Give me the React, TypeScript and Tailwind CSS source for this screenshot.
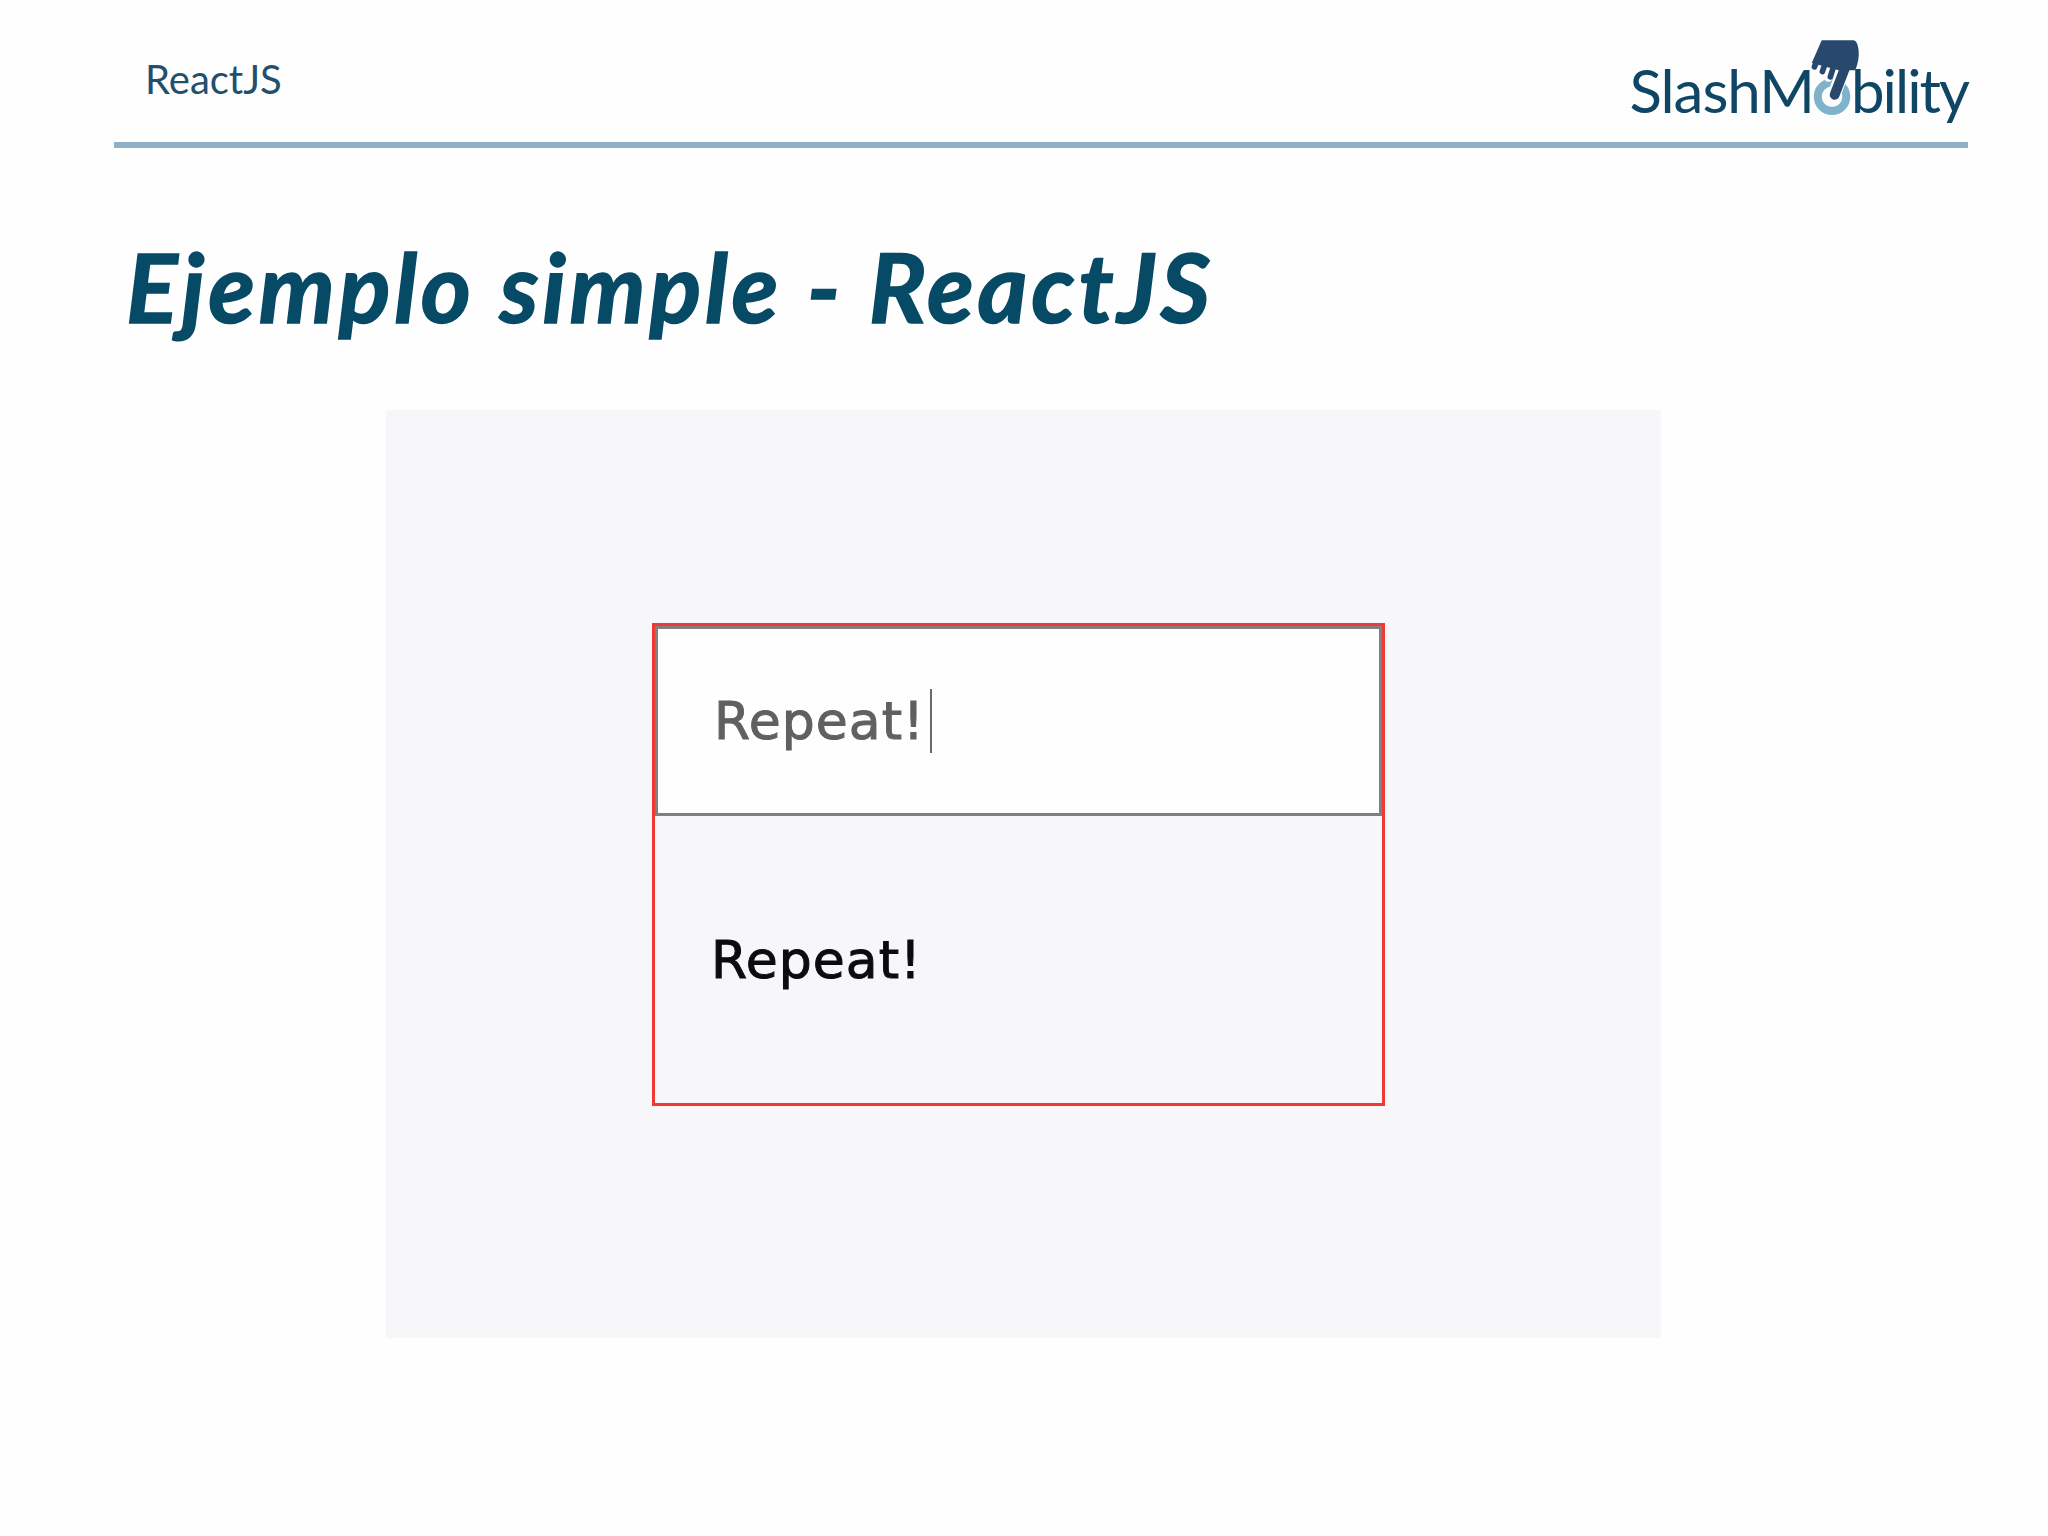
const Hand = () => (
  <svg
    viewBox="620 50 180 250"
    className="absolute right-[101px] top-[-23px] h-[83px] w-[60px]"
  >
    <circle cx="695" cy="230" r="43" fill="none" stroke="#7fb3cb" strokeWidth="24" />
    {/* white halo so the ring breaks around the finger */}
    <path d="M740 120 L702 222" stroke="#fefefe" strokeWidth="40" strokeLinecap="round" />
    <path d="M650 125 L640 140 M672 130 L662 155 M698 135 L684 172" stroke="#fefefe" strokeWidth="26" strokeLinecap="round" />
    <path d="M664 60 L760 60 Q772 62 775 90 Q778 120 765 150 L715 150 L634 128 Z" fill="#27496d" />
    <path d="M652 115 L642 140 M678 120 L666 154 M704 125 L690 170" stroke="#27496d" strokeWidth="17" strokeLinecap="round" />
    <path d="M745 115 L703 224" stroke="#27496d" strokeWidth="30" strokeLinecap="round" />
  </svg>
);

const Logo = () => (
  <div className="relative flex items-center font-['Lato',sans-serif] text-[60px] font-normal leading-none text-[#0f4666]">
    <span className="tracking-[-1px]">SlashM</span>
    <span className="w-[37px]" />
    <span className="tracking-[-2px]">bility</span>
    <Hand />
  </div>
);

export default function App() {
  return (
    <div className="h-[1536px] w-[2048px] overflow-hidden bg-[#fefefe]">
      <header className="ml-[114px] flex h-[148px] w-[1854px] items-end justify-between border-b-[6px] border-[#8fb0c6] pb-[22px] pl-[31px]">
        <span className="mb-[21px] font-['Lato',sans-serif] text-[40px] leading-none text-[#234f6e]">ReactJS</span>
        <Logo />
      </header>
      <h1 className="ml-[126px] mt-[88px] font-['Lato',sans-serif] text-[96px] font-bold italic leading-[100px] tracking-[3.75px] text-[#064a66] [-webkit-text-stroke:1.5px_#064a66]">
        Ejemplo simple - ReactJS
      </h1>
      <section className="ml-[386px] mt-[74px] h-[928px] w-[1275px] bg-[#f7f7f9] pl-[266px] pt-[213px]">
        <div className="h-[483px] w-[733px] border-[3px] border-[#ee3a36]">
          <div className="flex h-[190px] items-center border-[3px] border-[#808080] bg-[#fefefe] pl-[56px]">
            <span className="font-['DejaVu_Sans',sans-serif] text-[52px] tracking-[1px] text-[#5f6062] [-webkit-text-stroke:1px_#5f6062]">Repeat!</span>
            <span className="ml-[5px] h-[64px] w-[2px] bg-[#6a6a6a]" />
          </div>
          <p className="mt-[112px] pl-[56px] font-['DejaVu_Sans',sans-serif] text-[52px] leading-[64px] tracking-[1px] text-[#0b0b10] [-webkit-text-stroke:1px_#0b0b10]">Repeat!</p>
        </div>
      </section>
    </div>
  );
}
